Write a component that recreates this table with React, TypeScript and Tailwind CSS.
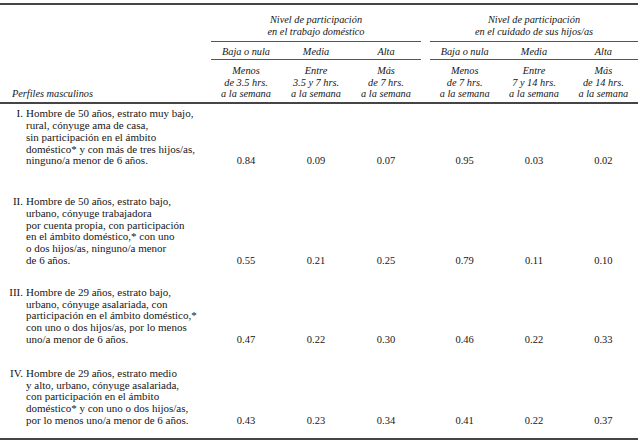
const groups = [
  {
    title: ["Nivel de participación", "en el trabajo doméstico"],
    cols: [
      { name: "Baja o nula", range: ["Menos", "de 3.5 hrs.", "a la semana"] },
      { name: "Media", range: ["Entre", "3.5 y 7 hrs.", "a la semana"] },
      { name: "Alta", range: ["Más", "de 7 hrs.", "a la semana"] },
    ],
  },
  {
    title: ["Nivel de participación", "en el cuidado de sus hijos/as"],
    cols: [
      { name: "Baja o nula", range: ["Menos", "de 7 hrs.", "a la semana"] },
      { name: "Media", range: ["Entre", "7 y 14 hrs.", "a la semana"] },
      { name: "Alta", range: ["Más", "de 14 hrs.", "a la semana"] },
    ],
  },
];

const rows = [
  {
    num: "I.",
    gap: "mt-[4px]",
    lines: [
      "Hombre de 50 años, estrato muy bajo,",
      "rural, cónyuge ama de casa,",
      "sin participación en el ámbito",
      "doméstico* y con más de tres hijos/as,",
      "ninguno/a menor de 6 años.",
    ],
    values: ["0.84", "0.09", "0.07", "0.95", "0.03", "0.02"],
  },
  {
    num: "II.",
    gap: "mt-[29px]",
    lines: [
      "Hombre de 50 años, estrato bajo,",
      "urbano, cónyuge trabajadora",
      "por cuenta propia, con participación",
      "en el ámbito doméstico,* con uno",
      "o dos hijos/as, ninguno/a menor",
      "de 6 años.",
    ],
    values: ["0.55", "0.21", "0.25", "0.79", "0.11", "0.10"],
  },
  {
    num: "III.",
    gap: "mt-[20px]",
    lines: [
      "Hombre de 29 años, estrato bajo,",
      "urbano, cónyuge asalariada, con",
      "participación en el ámbito doméstico,*",
      "con uno o dos hijos/as, por lo menos",
      "uno/a menor de 6 años.",
    ],
    values: ["0.47", "0.22", "0.30", "0.46", "0.22", "0.33"],
  },
  {
    num: "IV.",
    gap: "mt-[22px]",
    lines: [
      "Hombre de 29 años, estrato medio",
      "y alto, urbano, cónyuge asalariada,",
      "con participación en el ámbito",
      "doméstico* y con uno o dos hijos/as,",
      "por lo menos uno/a menor de 6 años.",
    ],
    values: ["0.43", "0.23", "0.34", "0.41", "0.22", "0.37"],
  },
];

function HeaderGroup({ group, width }: { group: (typeof groups)[number]; width: string }) {
  return (
    <div className={`flex flex-col ${width}`}>
      <div className="border-b border-[#555] pt-[9px] pb-[3px] text-center text-[10.3px] leading-[12px] italic">
        {group.title.map((t) => (
          <div key={t}>{t}</div>
        ))}
      </div>
      <div className="grid grid-cols-3 border-b border-[#555] pt-[4px] pb-[1px] text-center text-[10.3px] leading-[12px] italic">
        {group.cols.map((c) => (
          <div key={c.name}>{c.name}</div>
        ))}
      </div>
      <div className="grid grid-cols-3 pt-[5px] pb-[2px] text-center text-[10.3px] leading-[11.7px] italic">
        {group.cols.map((c) => (
          <div key={c.name}>
            {c.range.map((r) => (
              <div key={r}>{r}</div>
            ))}
          </div>
        ))}
      </div>
    </div>
  );
}

export default function App() {
  return (
    <div className="h-[441px] w-[644px] bg-white pt-[3px] font-['Liberation_Serif',serif] text-[#161616]">
      <div className="w-[638px]">
        <div className="flex border-t-2 border-b-2 border-[#454545]">
          <div className="flex w-[211px] flex-col justify-end pb-[2px] pl-[12px] text-[10.3px] leading-[11.7px] italic">
            Perfiles masculinos
          </div>
          <HeaderGroup group={groups[0]} width="w-[210px]" />
          <div className="w-[9px]" />
          <HeaderGroup group={groups[1]} width="w-[208px]" />
        </div>

        {rows.map((row) => (
          <div key={row.num} className={`flex items-end ${row.gap}`}>
            <div className="flex w-[211px] text-[11px] leading-[11.8px]">
              <span className="w-[26px] shrink-0 pr-[3px] text-right">{row.num}</span>
              <div className="whitespace-nowrap">
                {row.lines.map((l) => (
                  <div key={l}>{l}</div>
                ))}
              </div>
            </div>
            <div className="grid w-[210px] grid-cols-3 text-center text-[10.5px] leading-[11.8px]">
              {row.values.slice(0, 3).map((v, i) => (
                <div key={i}>{v}</div>
              ))}
            </div>
            <div className="w-[9px]" />
            <div className="grid w-[208px] grid-cols-3 text-center text-[10.5px] leading-[11.8px]">
              {row.values.slice(3).map((v, i) => (
                <div key={i}>{v}</div>
              ))}
            </div>
          </div>
        ))}

        <div className="mt-[11px] border-t-2 border-[#454545]" />
      </div>
    </div>
  );
}
